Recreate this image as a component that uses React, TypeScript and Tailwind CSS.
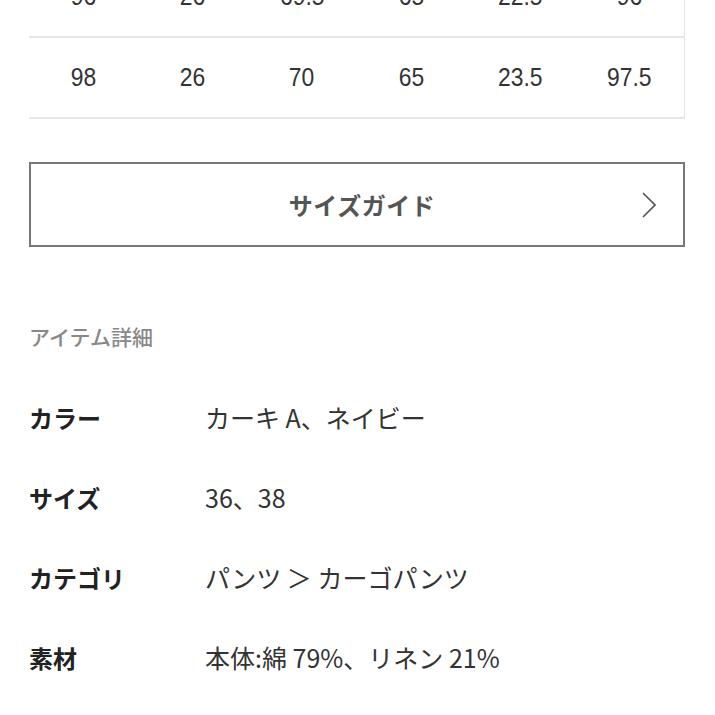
const rows = [
  ["96", "26", "69.5", "65", "22.5", "96"],
  ["98", "26", "70", "65", "23.5", "97.5"],
];

const details = [
  { label: "カラー", value: "カーキ A、ネイビー" },
  { label: "サイズ", value: "36、38" },
  { label: "カテゴリ", value: "パンツ ＞ カーゴパンツ" },
  { label: "素材", value: "本体:綿 79%、リネン 21%" },
];

const jp = "font-['Noto_Sans_CJK_JP','Noto_Sans',sans-serif]";

export default function App() {
  return (
    <div className={`w-[715px] h-[715px] overflow-hidden bg-white pl-[29px] pr-[30px] ${jp}`}>
      {/* size table, scrolled so the previous row is cut off */}
      <div className="-mt-[43px] border-r border-[#e3e3e3]">
        {rows.map((row, i) => (
          <div key={i} className="grid grid-cols-6 h-[81px] border-b-2 border-[#e6e6e6] items-center">
            {row.map((v, j) => (
              <div key={j} className="text-center">
                <span className="inline-block scale-x-[0.88] text-[26px] text-[#333] font-['Liberation_Sans',Arial,sans-serif]">{v}</span>
              </div>
            ))}
          </div>
        ))}
      </div>

      <button className="relative mt-[43px] w-full h-[85px] border-2 border-[#777] flex items-center justify-center">
        <span className="ml-[10px] text-[24px] font-bold text-[#555] tracking-[0.5px]">サイズガイド</span>
        <svg className="absolute right-[27px] top-1/2 -translate-y-1/2" width="14" height="26" viewBox="0 0 14 26" fill="none">
          <polyline points="1,1 13,13 1,25" stroke="#555" strokeWidth="1.6" />
        </svg>
      </button>

      <div className="mt-[75px] text-[21px] leading-[28px] text-[#888] font-medium">アイテム詳細</div>

      <div className="mt-[28px]">
        {details.map((d) => (
          <div key={d.label} className="flex items-center h-[80px]">
            <div className="w-[176px] text-[24px] font-bold text-[#222]">{d.label}</div>
            <div className="text-[25px] text-[#333]">{d.value}</div>
          </div>
        ))}
      </div>
    </div>
  );
}
